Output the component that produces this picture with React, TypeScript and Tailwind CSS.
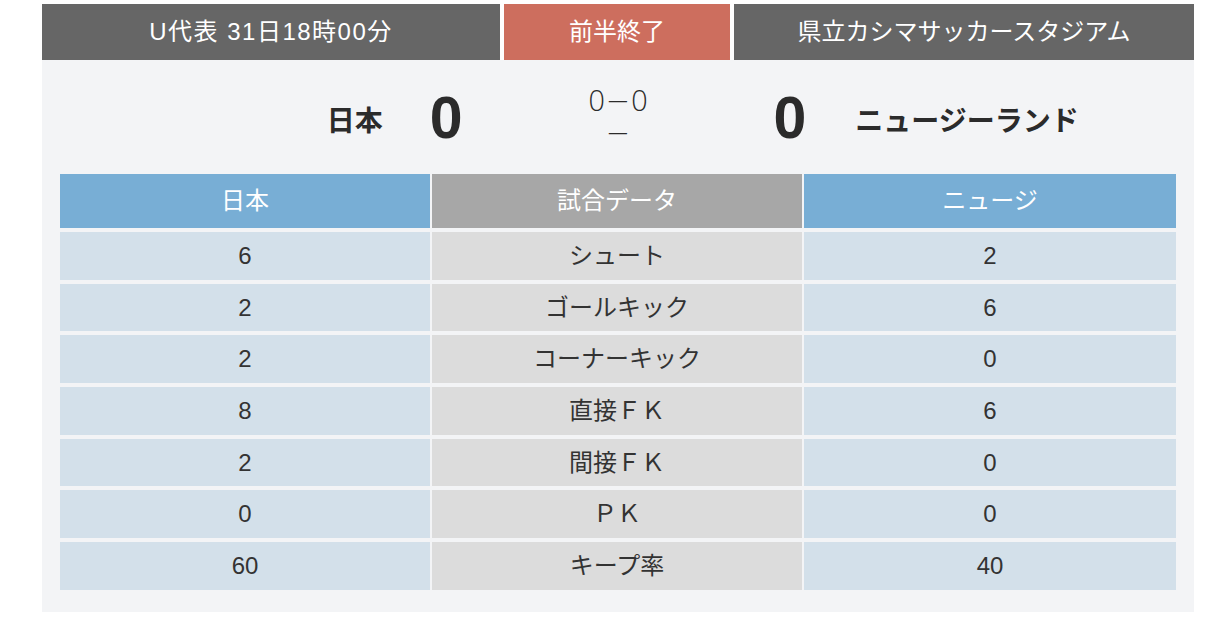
const jp = "font-['Liberation_Sans','Noto_Sans_CJK_JP',sans-serif]";

const rows: [string, string, string][] = [
  ["6", "シュート", "2"],
  ["2", "ゴールキック", "6"],
  ["2", "コーナーキック", "0"],
  ["8", "直接ＦＫ", "6"],
  ["2", "間接ＦＫ", "0"],
  ["0", "ＰＫ", "0"],
  ["60", "キープ率", "40"],
];

export default function App() {
  return (
    <div className={`min-h-screen bg-white pt-[4px] ${jp}`}>
      <div className="ml-[42px] w-[1152px]">
        {/* top info bar */}
        <div className="flex h-[56px] gap-[4px] text-[24px] text-white">
          <div className="flex w-[458px] items-center justify-center bg-[#666666] tracking-[1.5px]">U代表 31日18時00分</div>
          <div className="flex w-[226px] items-center justify-center bg-[#cd6e5e]">前半終了</div>
          <div className="flex w-[460px] items-center justify-center bg-[#666666]">県立カシマサッカースタジアム</div>
        </div>

        <div className="bg-[#f3f4f6] px-[18px] pb-[22px]">
          {/* score */}
          <div className="-mx-[18px] grid h-[114px] grid-cols-[1fr_auto_311px_auto_1fr] items-center text-[#2b2b2b]">
            <div className="mt-[9px] pr-[47px] text-right text-[28px] font-bold">日本</div>
            <div className="mt-[2px] text-[59px] font-bold leading-none">0</div>
            <div className="flex flex-col items-center font-['DejaVu_Sans',sans-serif] text-[29px] leading-[32px] font-extralight">
              <span>0−0</span>
              <span>−</span>
            </div>
            <div className="mt-[2px] text-[59px] font-bold leading-none">0</div>
            <div className="mt-[9px] pl-[49px] text-[28px] font-bold">ニュージーランド</div>
          </div>

          {/* stats table */}
          <div className="grid grid-cols-[370px_370px_372px] gap-x-[2px] gap-y-[4px] text-[24px]">
            <div className="flex h-[54px] items-center justify-center bg-[#78aed5] text-white">日本</div>
            <div className="flex h-[54px] items-center justify-center bg-[#a7a7a7] text-white">試合データ</div>
            <div className="flex h-[54px] items-center justify-center bg-[#78aed5] text-white">ニュージ</div>
            {rows.map(([a, label, b]) => (
              <div key={label} className="contents text-[#333333]">
                <div className="flex h-[47.7px] items-center justify-center bg-[#d3e0ea]">{a}</div>
                <div className="flex h-[47.7px] items-center justify-center bg-[#dcdcdc]">{label}</div>
                <div className="flex h-[47.7px] items-center justify-center bg-[#d3e0ea]">{b}</div>
              </div>
            ))}
          </div>
        </div>
      </div>
    </div>
  );
}
